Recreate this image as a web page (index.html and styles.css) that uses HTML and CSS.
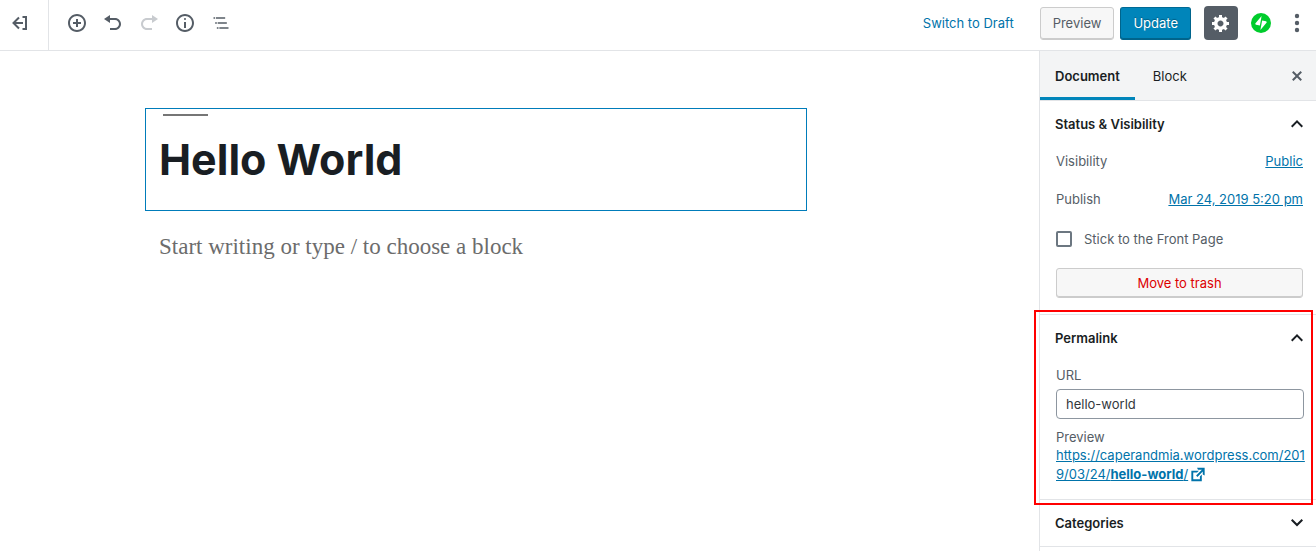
FILE: index.html
```html
<!DOCTYPE html>
<html lang="en">
<head>
<meta charset="utf-8">
<title>Edit Post</title>
<link rel="stylesheet" href="styles.css">
</head>
<body>
<div class="editor">
  <header class="header">
    <a class="exit" href="#" aria-label="Back to posts">
      <svg class="icon" viewBox="0 0 20 20"><path d="M10 4.500L4.500 10l5.500 5.500M4.500 10H14M13.500 4H17v12h-3.500" fill="none" stroke="currentColor" stroke-width="2"/></svg>
    </a>
    <div class="tools">
      <button class="tool" type="button" aria-label="Add block"><svg class="icon" viewBox="0 0 20 20"><path d="M10 1c-5 0-9 4-9 9s4 9 9 9 9-4 9-9-4-9-9-9zm0 16c-3.900 0-7-3.100-7-7s3.100-7 7-7 7 3.100 7 7-3.100 7-7 7zm1-11H9v3H6v2h3v3h2v-3h3V9h-3V6z"/></svg></button>
      <button class="tool" type="button" aria-label="Undo"><svg class="icon" viewBox="0 0 20 20"><path d="M12 5H7V2L1 6l6 4V7h5c2.200 0 4 1.800 4 4s-1.800 4-4 4H7v2h5c3.300 0 6-2.700 6-6s-2.700-6-6-6z"/></svg></button>
      <button class="tool" type="button" aria-label="Redo" disabled><svg class="icon" viewBox="0 0 20 20"><path d="M8 5h5V2l6 4-6 4V7H8c-2.200 0-4 1.800-4 4s1.800 4 4 4h5v2H8c-3.300 0-6-2.700-6-6s2.700-6 6-6z"/></svg></button>
      <button class="tool" type="button" aria-label="Content structure"><svg class="icon" viewBox="0 0 20 20"><path d="M9 15h2V9H9v6zm1-10c-.5 0-1 .5-1 1s.5 1 1 1 1-.5 1-1-.5-1-1-1zm0-4c-5 0-9 4-9 9s4 9 9 9 9-4 9-9-4-9-9-9zm0 16c-3.900 0-7-3.100-7-7s3.100-7 7-7 7 3.100 7 7-3.100 7-7 7z"/></svg></button>
      <button class="tool" type="button" aria-label="Block navigation"><svg class="icon" viewBox="0 0 24 24"><path d="M5 5H3v2h2V5zm3 8h11v-2H8v2zm9-8H6v2h11V5zM7 11H5v2h2v-2zm0 8h2v-2H7v2zm3-2v2h11v-2H10z"/></svg></button>
    </div>
    <div class="actions">
      <button class="draft" type="button">Switch to Draft</button>
      <button class="button" type="button">Preview</button>
      <button class="button button-primary" type="button">Update</button>
      <button class="settings" type="button" aria-label="Settings"><svg class="icon" viewBox="0 0 20 20"><path d="M18 12h-2.180c-.17.7-.44 1.350-.81 1.930l1.540 1.540-2.100 2.100-1.540-1.540c-.58.36-1.230.63-1.910.79V19H8v-2.180c-.68-.16-1.330-.43-1.910-.79l-1.540 1.540-2.120-2.120 1.540-1.540c-.36-.58-.63-1.230-.79-1.910H1V9.030h2.170c.16-.7.44-1.350.8-1.940L2.430 5.550l2.100-2.100 1.540 1.540c.58-.37 1.240-.64 1.930-.81V2h3v2.180c.68.16 1.330.43 1.910.79l1.540-1.540 2.120 2.120-1.540 1.540c.36.59.64 1.240.8 1.940H18V12zm-8.500 1.500c1.660 0 3-1.340 3-3s-1.340-3-3-3-3 1.340-3 3 1.340 3 3 3z"/></svg></button>
      <button class="tool jetpack" type="button" aria-label="Jetpack"><svg class="icon" viewBox="0 0 20 20"><circle cx="10" cy="10" r="10"/><path class="bolt" d="M10.600 3L4.300 10.600Q4.200 11.500 5 11.700L8.900 12.600zM9.400 17L15.700 9.400Q15.800 8.500 15 8.300L11.100 7.400z"/></svg></button>
      <button class="tool" type="button" aria-label="More options"><svg class="icon" viewBox="0 0 20 20"><circle cx="10" cy="3" r="2.200"/><circle cx="10" cy="10" r="2.200"/><circle cx="10" cy="17" r="2.200"/></svg></button>
    </div>
  </header>
  <div class="body">
    <main class="canvas">
      <div class="post">
        <h1 class="title">Hello World</h1>
        <p class="placeholder">Start writing or type / to choose a block</p>
      </div>
    </main>
    <aside class="sidebar">
      <div class="tabs">
        <button class="tab tab-active" type="button">Document</button>
        <button class="tab" type="button">Block</button>
        <button class="close" type="button" aria-label="Close settings"><svg class="icon" viewBox="0 0 20 20"><path d="M14.950 6.460L11.410 10l3.540 3.540-1.410 1.410L10 11.420l-3.530 3.530-1.420-1.420L8.580 10 5.050 6.470l1.420-1.420L10 8.580l3.540-3.530z"/></svg></button>
      </div>
      <section class="panel">
        <h2 class="panel-title"><button class="toggle" type="button" aria-expanded="true">Status &amp; Visibility <svg class="chevron" viewBox="0 0 24 24"><path d="M12 8l-6 6 1.410 1.410L12 10.830l4.590 4.580L18 14z"/></svg></button></h2>
        <div class="panel-body status">
          <div class="row"><span>Visibility</span><a href="#">Public</a></div>
          <div class="row"><span>Publish</span><a href="#">Mar 24, 2019 5:20 pm</a></div>
          <label class="check"><input class="box" type="checkbox">Stick to the Front Page</label>
          <button class="button trash" type="button">Move to trash</button>
        </div>
      </section>
      <section class="panel highlighted">
        <h2 class="panel-title"><button class="toggle" type="button" aria-expanded="true">Permalink <svg class="chevron" viewBox="0 0 24 24"><path d="M12 8l-6 6 1.410 1.410L12 10.830l4.590 4.580L18 14z"/></svg></button></h2>
        <div class="panel-body permalink">
          <label class="label" for="slug">URL</label>
          <input class="slug" id="slug" type="text" value="hello-world">
          <p class="label">Preview</p>
          <p class="preview"><a class="link" href="#">https://caperandmia.wordpress.com/2019/03/24/<b>hello-world</b>/</a><svg class="external" viewBox="0 0 20 20"><path d="M9 3h8v8l-2-1V6.920l-5.600 5.590-1.410-1.410L14.080 5H10zm3 12v-3l2-2v7H3V6h8L9 8H5v7h7z"/></svg></p>
        </div>
      </section>
      <section class="panel">
        <h2 class="panel-title"><button class="toggle" type="button" aria-expanded="false">Categories <svg class="chevron" viewBox="0 0 24 24"><path d="M12 15.410l6-6L16.590 8 12 12.580 7.410 8 6 9.410z"/></svg></button></h2>
      </section>
    </aside>
  </div>
</div>
</body>
</html>
```
FILE: styles.css
```css
* { box-sizing: border-box; }
body {
  margin: 0;
  background: #fff;
  color: #555d66;
  font: 13px/18px Inter, "Liberation Sans", sans-serif;
}
button, input { font: inherit; color: inherit; }
button { margin: 0; padding: 0; border: 0; background: none; }
h1, h2, p { margin: 0; }
a { color: #0073aa; }
svg { display: block; fill: currentColor; }
.icon { width: 20px; height: 20px; }

.editor { display: flex; flex-direction: column; min-height: 100vh; }
.header { display: flex; align-items: stretch; height: 51px; border-bottom: 1px solid #e2e4e7; }
.exit { display: flex; align-items: center; width: 49px; padding: 0 0 4px 9px; border-right: 1px solid #e2e4e7; color: #555d66; }
.tools { display: flex; align-items: center; padding: 0 0 4px 10px; }
.tool { display: grid; place-items: center; width: 36px; height: 36px; }
.tool:disabled { color: #c8cbcf; }
.actions { display: flex; align-items: center; margin-left: auto; padding: 0 1px 4px 0; }
.draft { margin-right: 26px; color: #0073aa; }
.button {
  height: 33px;
  margin-right: 6px;
  padding: 0 12px;
  border: 1px solid #ccc;
  border-radius: 3px;
  background: #f7f7f7;
  box-shadow: inset 0 -1px 0 #ccc;
}
.button-primary {
  margin-right: 13px;
  border-color: #006a95 #00648c #00648c;
  background: #0085ba;
  box-shadow: inset 0 -1px 0 #00648c;
  color: #fff;
  text-shadow: 0 -1px 1px #005d82;
}
.settings { display: grid; place-items: center; width: 34px; height: 34px; margin-right: 5px; border-radius: 4px; background: #555d66; color: #fff; }
.jetpack { color: #00cc2c; }
.bolt { fill: #fff; }

.body { display: flex; flex: 1; }
.canvas { flex: 1; padding: 57px 232px 0 145px; }
.title {
  padding: 5px 13px 25px;
  border: 1px solid #007cba;
  color: #191e23;
  font-size: 43px;
  line-height: 51px;
}
.title::before { content: ""; display: block; width: 45px; height: 2px; margin: 0 0 18px 4px; background: #767676; }
.placeholder { padding: 22px 14px; color: #6c6c6c; font: 23px/28px "Liberation Serif", serif; }

.sidebar { width: 277px; border-left: 1px solid #e2e4e7; }
.tabs { display: flex; height: 50px; border-bottom: 1px solid #e2e4e7; background: #f3f4f5; color: #191e23; }
.tab { padding: 3px 18px 0; border-bottom: 3px solid transparent; }
.tab-active { padding: 3px 15px 0; border-color: #0085ba; font-weight: 600; }
.close { margin: 0 9px 0 auto; color: #555d66; }
.panel { border-bottom: 1px solid #e2e4e7; }
.panel-title { font-size: 13px; font-weight: 600; }
.toggle { display: flex; align-items: center; justify-content: space-between; width: 100%; height: 46px; padding: 0 7px 0 15px; color: #191e23; }
.chevron { width: 24px; height: 24px; }
.panel-body { padding: 0 13px 16px 16px; }
.status { display: flex; flex-direction: column; gap: 20px; padding-top: 5px; }
.row { display: flex; justify-content: space-between; }
.check { display: flex; align-items: center; gap: 12px; padding-top: 2px; }
.box { appearance: none; width: 16px; height: 16px; margin: 0; border: 2px solid #6c7781; border-radius: 2px; }
.trash { height: 30px; margin: 0; color: #d00; }
.highlighted { position: relative; }
.highlighted::after { content: ""; position: absolute; inset: -5px 3px -6px -6px; border: 2px solid #f00; pointer-events: none; }
.permalink { padding: 5px 12px 15px 16px; }
.label { display: block; }
.slug { display: block; width: 100%; height: 30px; margin: 5px 0 9px; padding: 0 9px; border: 1px solid #8d96a0; border-radius: 4px; background: #fff; color: #32373c; }
.preview { margin-right: -6px; line-height: 19px; word-break: break-all; }
.external { display: inline-block; width: 20px; height: 19px; vertical-align: top; color: #0073aa; }
```
